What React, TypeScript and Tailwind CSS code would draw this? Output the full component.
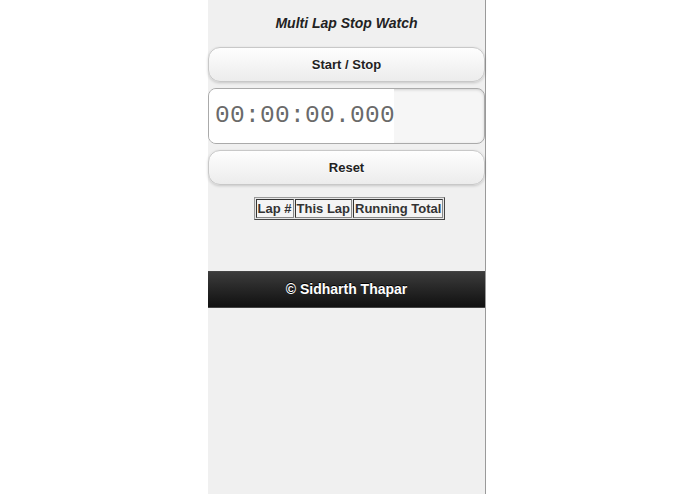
const headers = ["Lap #", "This Lap", "Running Total"];

function Btn({ label }: { label: string }) {
  return (
    <button className="flex h-[35px] w-full items-center justify-center rounded-[12px] border border-[#c8c8c8] bg-gradient-to-b from-[#fefefe] to-[#ececec] text-[13px] font-bold text-[#222] shadow-[0_1px_3px_rgba(0,0,0,0.18)] [text-shadow:0_1px_0_#fff]">
      {label}
    </button>
  );
}

export default function App() {
  return (
    <div className="flex h-[494px] w-[695px] justify-center bg-white font-['Liberation_Sans',Arial,sans-serif]">
      <div className="ml-[-1px] flex h-full w-[278px] flex-col border-r border-[#9a9a9a] bg-[#f0f0f0]">
        <div className="flex h-[47px] items-center justify-center pb-[1px] text-[14px] font-bold italic text-[#222]">
          Multi Lap Stop Watch
        </div>
        <Btn label="Start / Stop" />
        <div className="mt-[6px] flex h-[56px] items-center overflow-hidden rounded-[8px] border border-[#aaa] bg-[#f6f6f6] shadow-[inset_0_1px_3px_rgba(0,0,0,0.15)]">
          <div className="flex h-full w-[185px] items-center bg-white pl-[6px] font-['Liberation_Mono','Courier_New',monospace] text-[24.5px] tracking-[0.3px] text-[#6a6a6a]">
            00:00:00.000
          </div>
        </div>
        <div className="mt-[6px]">
          <Btn label="Reset" />
        </div>
        <div className="mt-[12px] flex justify-center pl-[6px]">
          <table className="border-separate border-spacing-[1px] border border-[#999] bg-[#e6e6e6] text-[13px] font-bold text-[#333] [border-style:outset]">
            <thead>
              <tr>
                {headers.map((h) => (
                  <th key={h} className="border border-[#888] bg-[#f4f4f4] px-[1px] py-[1px] leading-[15px] [border-style:inset]">
                    {h}
                  </th>
                ))}
              </tr>
            </thead>
          </table>
        </div>
        <div className="mt-[51px] flex h-[37px] items-center justify-center border-y border-[#444] bg-gradient-to-b from-[#3c3c3c] to-[#111] text-[14px] font-bold text-white [text-shadow:0_-1px_0_#000]">
          © Sidharth Thapar
        </div>
      </div>
    </div>
  );
}
